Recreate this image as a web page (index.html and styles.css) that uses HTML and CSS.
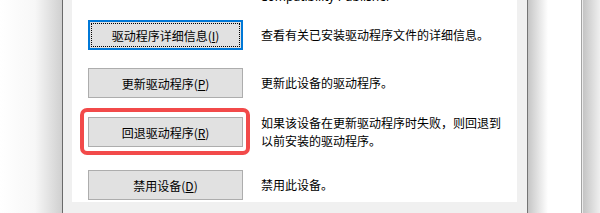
FILE: index.html
```html
<!DOCTYPE html>
<html lang="zh-CN">

<head>
    <meta charset="UTF-8">
    <meta name="viewport" content="width=device-width, initial-scale=1.0">
    <title>驱动程序</title>
    <link rel="stylesheet" href="styles.css">
</head>

<body>
    <main class="screen">
        <div class="shadow shadow--left"></div>
        <section class="dialog">
            <div class="pane">
                <p class="info">Compatibility Publisher</p>
                <div class="list">
                    <div class="row">
                        <div class="btn__wrap"><button class="btn btn--focus">驱动程序详细信息(<u>I</u>)</button></div>
                        <p class="desc">查看有关已安装驱动程序文件的详细信息。</p>
                    </div>
                    <div class="row">
                        <div class="btn__wrap"><button class="btn">更新驱动程序(<u>P</u>)</button></div>
                        <p class="desc">更新此设备的驱动程序。</p>
                    </div>
                    <div class="row row--wrap">
                        <div class="btn__wrap">
                            <button class="btn">回退驱动程序(<u>R</u>)</button>
                            <span class="highlight"></span>
                        </div>
                        <p class="desc">如果该设备在更新驱动程序时失败，则回退到以前安装的驱动程序。</p>
                    </div>
                    <div class="row">
                        <div class="btn__wrap"><button class="btn">禁用设备(<u>D</u>)</button></div>
                        <p class="desc">禁用此设备。</p>
                    </div>
                </div>
            </div>
        </section>
        <div class="shadow shadow--right"></div>
        <div class="backdrop"></div>
        <div class="shadow shadow--far"></div>
    </main>
</body>

</html>
```

FILE: styles.css
```css
* {
    box-sizing: border-box;
}

body {
    margin: 0;
    overflow: hidden;
    background: #fff;
    color: #000;
    font-family: "Noto Sans CJK SC", sans-serif;
    font-size: 12px;
}

p {
    margin: 0;
}

.screen {
    display: flex;
    height: 213px;
}

.shadow--left {
    width: 62px;
    background: linear-gradient(to right, #fff, #f7f7f7 35px, #d0d0d0);
}

/* 对话框 */
.dialog {
    width: 466px;
    padding: 0 10px 0 9px;
    background: #f0f0f0;
    border-left: 1px solid #6a6a6a;
    border-right: 1px solid #747474;
    overflow: hidden;
}

.pane {
    height: 100%;
    background: #fff;
}

.info {
    margin-top: -11px;
    padding-left: 188px;
    line-height: 16px;
    font-family: "Noto Sans", "Noto Sans CJK SC", sans-serif;
}

.list {
    display: flex;
    flex-direction: column;
    gap: 18px;
    margin-top: 15px;
    padding-left: 16px;
}

.row {
    display: flex;
    align-items: center;
    gap: 18px;
}

.row--wrap {
    margin-top: -2px;
    margin-bottom: 2px;
}

.btn__wrap {
    position: relative;
    flex: none;
}

.btn {
    display: block;
    width: 155px;
    height: 30px;
    padding: 0;
    border: 1px solid #adadad;
    background: #e1e1e1;
    color: #000;
    font: inherit;
}

.btn--focus {
    border: 2px solid #0078d7;
    outline: 1px dotted #000;
    outline-offset: -4px;
}

.desc {
    max-width: 244px;
    line-height: 18px;
}

/* 红框标注 */
.highlight {
    position: absolute;
    top: -9px;
    right: -7px;
    bottom: -8px;
    left: -8px;
    border: 4px solid #f24a4a;
    border-radius: 7px;
    pointer-events: none;
}

.shadow--right {
    width: 20px;
    background: linear-gradient(to right, #c6c6c6, #fff);
}

.backdrop {
    width: 33px;
    background: #fff;
}

.shadow--far {
    flex: 1;
    border-left: 1px solid #a4a4a4;
    background: linear-gradient(to right, #ececec 0 1px, #c4c4c4 1px, #efefef);
}
```
